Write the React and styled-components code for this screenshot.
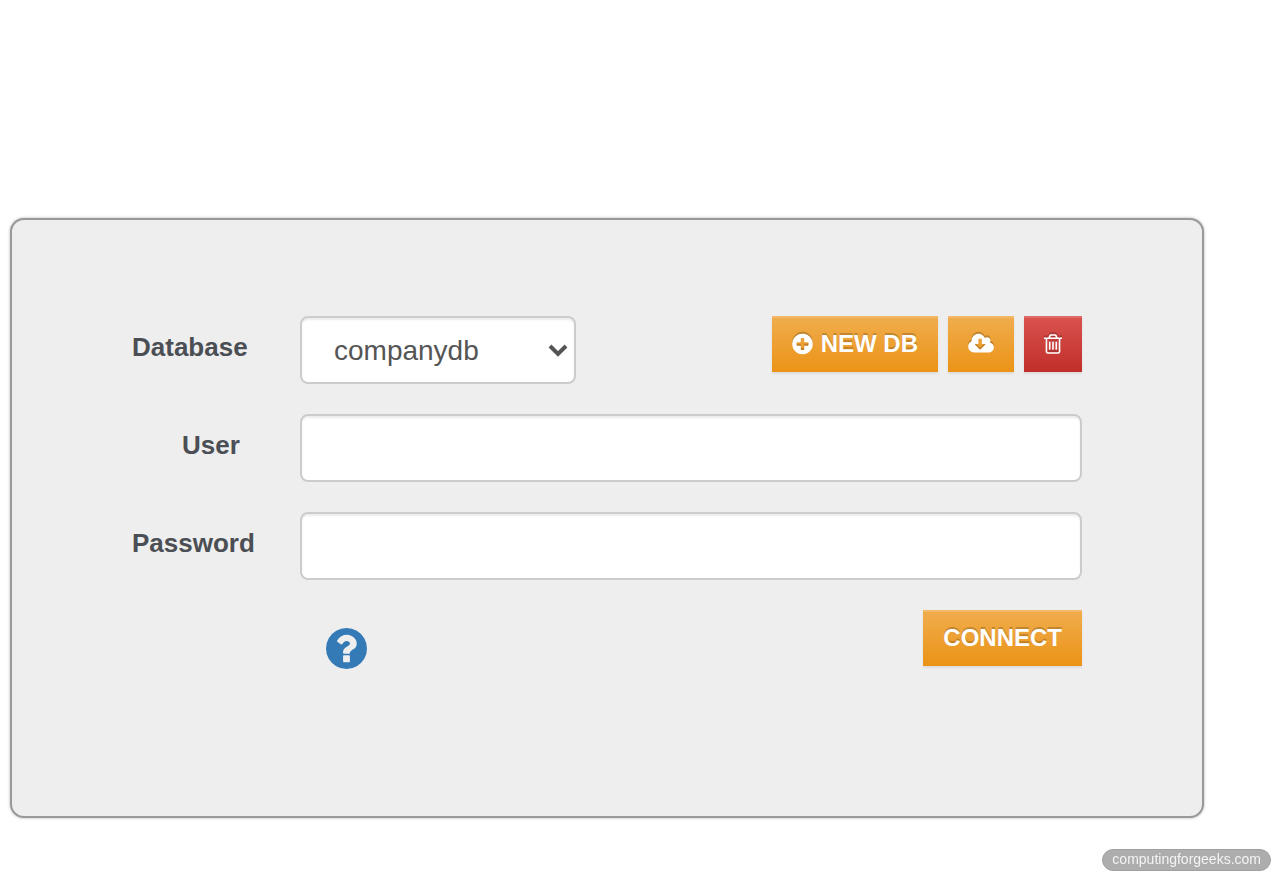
import React, { useState } from "react";
import styled, { createGlobalStyle } from "styled-components";

const GlobalStyle = createGlobalStyle`
    * {
        box-sizing: border-box;
    }

    body {
        margin: 0;
        background: #fff;
        font-family: "Liberation Sans", Arial, sans-serif;
    }
`;

const Page = styled.main`
    padding: 218px 76px 62px 10px;
`;

const LoginForm = styled.form`
    display: grid;
    gap: 30px;
    padding: 96px 120px 147px;
    border: 2px solid #999;
    border-radius: 14px;
    background: #eee;
    box-shadow: 0 0 3px rgba(0, 0, 0, 0.3);
`;

const Row = styled.div`
    display: grid;
    grid-template-columns: 168px 1fr;
    align-items: start;
`;

const Label = styled.label`
    padding: 13px 0 0 ${ props => props.$indent ? '50px' : '0' };
    color: #4b4e54;
    font-size: 26px;
    font-weight: bold;
    line-height: 36px;
`;

const Field = styled.div`
    display: flex;
    justify-content: space-between;
    align-items: flex-start;
`;

const Input = styled.input`
    width: 100%;
    height: 68px;
    padding: 12px 24px;
    border: 2px solid #ccc;
    border-radius: 8px;
    background: #fff;
    box-shadow: inset 0 2px 2px rgba(0, 0, 0, 0.075);
    color: #555;
    font-family: inherit;
    font-size: 28px;
`;

const SelectBox = styled.div`
    position: relative;
    width: 276px;
`;

const Select = styled(Input).attrs({ as: 'select' })`
    padding: 0 40px 0 32px;
    appearance: none;
`;

const Chevron = styled.svg`
    position: absolute;
    top: 27px;
    right: 8px;
    width: 20px;
    height: 14px;
    fill: none;
    stroke: #555;
    stroke-width: 4;
    pointer-events: none;
`;

const Actions = styled.div`
    display: flex;
    gap: 10px;
`;

const Button = styled.button`
    display: flex;
    align-items: center;
    gap: 8px;
    padding: 12px 20px;
    border: 0;
    background: ${ props => props.$danger
        ? 'linear-gradient(#d9534f, #c12e2a)'
        : 'linear-gradient(#f0ad4e, #eb9316)' };
    box-shadow: inset 0 2px 0 rgba(255, 255, 255, 0.15), 0 2px 2px rgba(0, 0, 0, 0.075);
    color: #fff;
    font-family: inherit;
    font-size: 24px;
    font-weight: bold;
    line-height: 32px;
    text-shadow: 0 -2px 0 rgba(0, 0, 0, 0.2);
    cursor: pointer;
`;

const Icon = styled.svg`
    display: block;
    width: ${ props => props.$width }px;
    height: ${ props => props.$height || 24 }px;
    fill: currentColor;
`;

const ButtonIcon = styled(Icon)`
    filter: drop-shadow(0 -2px 0 rgba(0, 0, 0, 0.2));
`;

const Footer = styled(Field)`
    padding-left: 194px;
`;

const HelpLink = styled.a`
    margin-top: 18px;
    color: #337ab7;
`;

const SiteBadge = styled.div`
    position: fixed;
    right: 9px;
    bottom: 9px;
    padding: 0 9px 2px;
    border: 1px solid #a0a0a0;
    border-radius: 11px;
    background: #adadad;
    color: #f4f4f4;
    font-size: 14px;
    line-height: 18px;
`;

const PlusIcon = () => (
    <ButtonIcon $width={ 21 } viewBox="128 0 1536 1792" aria-hidden="true">
        <path d="M1344 960v-128q0-26-19-45t-45-19h-256v-256q0-26-19-45t-45-19h-128q-26 0-45 19t-19 45v256h-256q-26 0-45 19t-19 45v128q0 26 19 45t45 19h256v256q0 26 19 45t45 19h128q26 0 45-19t19-45v-256h256q26 0 45-19t19-45zm320-64q0 209-103 385.5t-279.5 279.5-385.5 103-385.5-103-279.5-279.5-103-385.5 103-385.5 279.5-279.5 385.5-103 385.5 103 279.5 279.5 103 385.5z" />
    </ButtonIcon>
);

const CloudIcon = () => (
    <ButtonIcon $width={ 26 } viewBox="0 0 1920 1792" aria-hidden="true">
        <path d="M1280 928q0-14-9-23t-23-9h-224v-352q0-13-9.5-22.5t-22.5-9.5h-192q-13 0-22.5 9.5t-9.5 22.5v352h-224q-13 0-22.5 9.5t-9.5 22.5q0 14 9 23l352 352q9 9 23 9t23-9l351-351q10-12 10-24zm640 224q0 159-112.5 271.5t-271.5 112.5h-1088q-185 0-316.5-131.5t-131.5-316.5q0-130 70-240t188-165q-2-30-2-43 0-212 150-362t362-150q156 0 285.5 87t188.5 231q71-62 166-62 106 0 181 75t75 181q0 76-41 138 130 31 213.5 135.5t83.5 238.5z" />
    </ButtonIcon>
);

const TrashIcon = () => (
    <ButtonIcon $width={ 18 } viewBox="192 0 1408 1792" aria-hidden="true">
        <path d="M704 736v576q0 14-9 23t-23 9h-64q-14 0-23-9t-9-23v-576q0-14 9-23t23-9h64q14 0 23 9t9 23zm256 0v576q0 14-9 23t-23 9h-64q-14 0-23-9t-9-23v-576q0-14 9-23t23-9h64q14 0 23 9t9 23zm256 0v576q0 14-9 23t-23 9h-64q-14 0-23-9t-9-23v-576q0-14 9-23t23-9h64q14 0 23 9t9 23zm128 724v-948h-896v948q0 22 7 40.5t14.5 27 10.5 8.5h832q3 0 10.5-8.5t14.5-27 7-40.5zm-672-1076h448l-48-117q-7-9-17-11h-317q-10 2-17 11zm928 32v64q0 14-9 23t-23 9h-96v948q0 83-47 143.5t-113 60.5h-832q-66 0-113-58.5t-47-141.5v-952h-96q-14 0-23-9t-9-23v-64q0-14 9-23t23-9h309l70-167q15-37 54-63t79-26h320q40 0 79 26t54 63l70 167h309q14 0 23 9t9 23z" />
    </ButtonIcon>
);

const HelpIcon = () => (
    <Icon $width={ 41 } $height={ 41 } viewBox="128 128 1536 1536" aria-hidden="true">
        <path d="M1024 1376v-192q0-14-9-23t-23-9h-192q-14 0-23 9t-9 23v192q0 14 9 23t23 9h192q14 0 23-9t9-23zm256-672q0-88-55.5-163t-138.5-116-170-41q-243 0-371 213-15 24 8 42l132 100q7 6 19 6 16 0 25-12 53-68 86-92 34-24 86-24 48 0 85.5 26t37.5 59q0 38-20 61t-68 45q-63 28-115.5 86.5t-52.5 125.5v36q0 14 9 23t23 9h192q14 0 23-9t9-23q0-19 21.5-49.5t54.5-49.5q32-18 49-28.5t46-35 44.5-48 28-60.5 12.5-81zm384 192q0 209-103 385.5t-279.5 279.5-385.5 103-385.5-103-279.5-279.5-103-385.5 103-385.5 279.5-279.5 385.5-103 385.5 103 279.5 279.5 103 385.5z" />
    </Icon>
);

const App = () => {
    const [database, setDatabase] = useState('companydb');
    const [user, setUser] = useState('');
    const [password, setPassword] = useState('');

    return (
        <Page>
            <GlobalStyle />
            <LoginForm onSubmit={ (e) => e.preventDefault() }>
                <Row>
                    <Label htmlFor="database">Database</Label>
                    <Field>
                        <SelectBox>
                            <Select id="database" value={ database } onChange={ (e) => setDatabase(e.target.value) }>
                                <option value="companydb">companydb</option>
                            </Select>
                            <Chevron viewBox="0 0 20 14" aria-hidden="true">
                                <path d="M2 3l8 8 8-8" />
                            </Chevron>
                        </SelectBox>
                        <Actions>
                            <Button type="button"><PlusIcon />NEW DB</Button>
                            <Button type="button" aria-label="Restore database"><CloudIcon /></Button>
                            <Button type="button" aria-label="Delete database" $danger><TrashIcon /></Button>
                        </Actions>
                    </Field>
                </Row>
                <Row>
                    <Label htmlFor="user" $indent>User</Label>
                    <Input id="user" type="text" value={ user } onChange={ (e) => setUser(e.target.value) } />
                </Row>
                <Row>
                    <Label htmlFor="password">Password</Label>
                    <Input id="password" type="password" value={ password } onChange={ (e) => setPassword(e.target.value) } />
                </Row>
                <Footer>
                    <HelpLink href="#help" aria-label="Help"><HelpIcon /></HelpLink>
                    <Button type="submit">CONNECT</Button>
                </Footer>
            </LoginForm>
            <SiteBadge>computingforgeeks.com</SiteBadge>
        </Page>
    );
}

export default App;
